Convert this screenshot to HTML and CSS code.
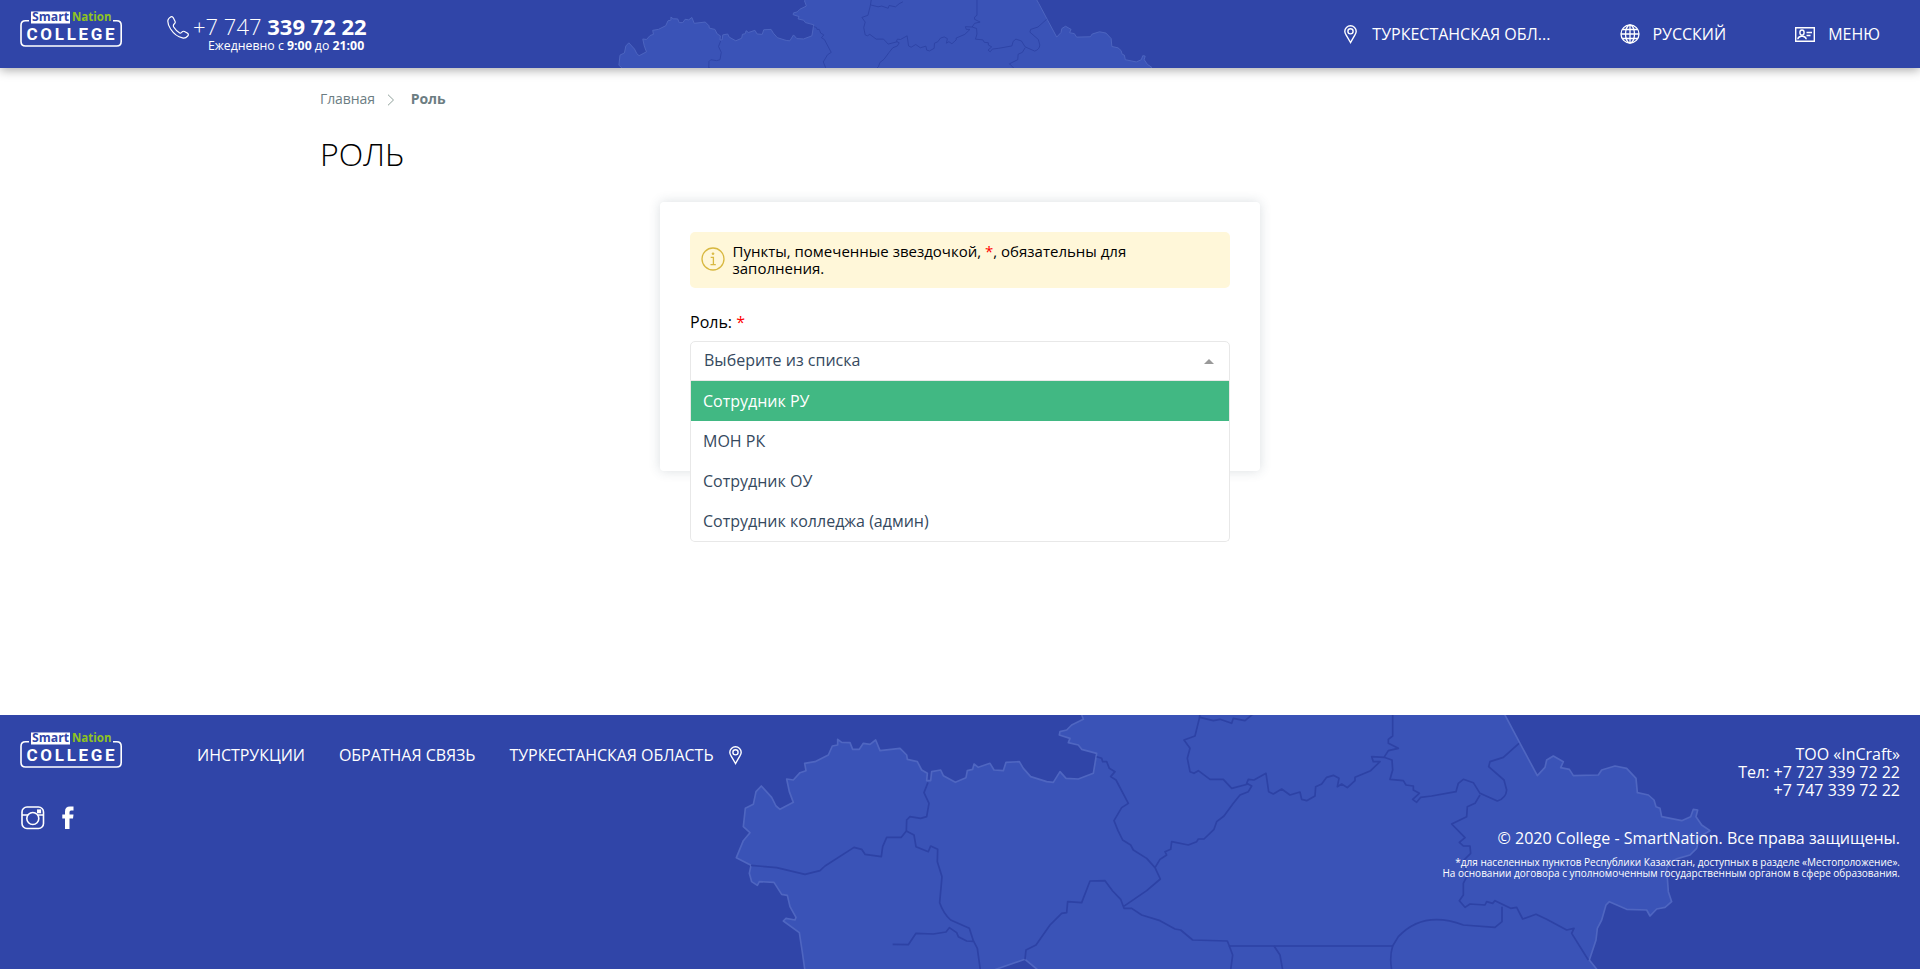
FILE: index.html
```html
<!DOCTYPE html>
<html lang="ru">
<head>
<meta charset="utf-8">
<title>Роль</title>
<link rel="stylesheet" href="styles.css">
</head>
<body>
<svg class="defs" width="0" height="0">
  <defs>
    <g id="map">
      <path class="map-land" d="M316 790L306 720 298 668 250 633 258 625 285 630 288 622 270 590 262 556 245 553 222 517 178 515 172 526 155 515 148 490 153 466 109 443 130 392 150 368 130 350 136 295 160 283 168 245 184 228 215 262 228 288 240 298 280 277 268 245 260 207 280 210 300 188 318 182 314 160 345 155 385 135 397 108 413 105 413 88 425 97 450 98 458 118 478 118 490 100 510 103 527 90 540 122 600 115 620 135 622 148 652 155 665 180 682 190 680 212 692 212 695 185 722 180 730 197 766 217 798 203 802 182 818 178 822 162 835 172 870 160 882 180 910 182 918 157 958 155 970 175 992 200 1040 215 1060 217 1080 185 1098 205 1135 207 1180 190 1190 130 1145 118 1135 105 1105 98 1110 85 1078 75 1080 65 1100 60 1115 45 1150 28 1140 0 1150 -20 2395 -20 2415 15 2460 100 2512 197 2535 172 2540 150 2560 138 2590 155 2582 173 2608 178 2620 197 2695 195 2705 180 2745 168 2780 175 2808 205 2812 248 2845 255 2862 270 2868 290 2880 295 2885 320 2945 332 2972 320 2980 298 2993 300 2988 320 3005 345 3030 362 2998 380 2990 415 2970 435 2935 445 2912 455 2900 475 2905 545 2915 575 2895 592 2870 597 2850 618 2840 600 2780 598 2728 575 2718 585 2705 630 2692 655 2688 690 2668 750 2700 790 1028 790 1010 777 975 748 890 777 860 790Z"/>
      <path class="map-line" d="M684 217L672 248 687 280 680 320 662 325 630 320 620 330 619 363 604 382 560 382 548 410 544 440 495 433 485 418 462 412 375 468 360 482 315 493 230 473 153 466"/>
      <path class="map-line" d="M619 363L642 375 648 410 685 425 692 408 713 418 712 455 726 500 719 578Q730 610 752 630L808 655 820 692 832 715 841 780M820 694L800 693 775 680 770 668 748 653 738 666 700 672 648 670 625 704 578 703"/>
      <path class="map-line" d="M1190 140L1205 145 1208 155 1220 155 1228 175 1245 185 1232 200 1248 210 1285 280 1265 293 1242 332 1254 362 1268 390 1292 405 1300 420 1340 445 1365 473 1381 507 1340 542 1270 590M975 748L978 720 1008 705 1050 645 1085 610 1100 608 1103 575 1145 578 1170 513 1215 512 1238 543 1262 568 1272 595 1295 595 1325 615 1380 632 1425 657 1442 660 1478 690 1582 693 1588 708 2078 708 2095 680Q2170 600 2290 645L2385 652 2406 635V590"/>
      <path class="map-line" d="M1365 473L1380 448 1400 435 1395 425 1412 418 1415 395 1465 405 1490 395 1495 387 1512 387 1542 358 1550 335 1572 318 1600 280 1620 255 1645 245 1655 228 1640 220 1645 208 1662 210 1698 190 1706 245 1720 252 1745 237 1770 255 1800 246 1805 268 1820 272 1845 258 1847 230 1865 222 1880 202 1900 196 1917 205 1912 230 1925 222 1942 233 1965 212 1965 202 2012 182 2040 155 2020 155 2015 140 2052 142 2065 122 2095 115 2065 100 2065 88 2078 78V-20"/>
      <path class="map-line" d="M1505 -20L1498 25 1485 78 1452 90 1470 115 1462 145 1470 185 1482 190 1495 182 1530 208 1570 208 1595 235 1645 222M1500 22L1540 32 1560 28 1595 40 1600 25 1635 32 1655 15 1675 5M2052 142L2076 150 2078 180 2070 208 2110 212 2118 225 2140 228 2140 240 2158 250 2138 268 2150 277 2162 262 2195 258 2268 245 2275 220 2290 208 2320 218 2340 250 2392 273Q2418 265 2420 240L2412 210 2366 170 2370 155 2410 142 2457 100"/>
      <path class="map-line" d="M2340 255L2325 280 2302 290 2300 320 2255 342 2295 383 2278 397 2290 408 2310 408 2312 430 2292 450 2300 500 2290 520 2290 555 2278 572 2295 592 2310 582 2355 585 2360 575 2378 580 2385 572 2432 595 2450 592 2468 627 2508 613 2540 628 2600 660 2622 655 2615 670 2665 750"/>
      <path class="map-line" d="M1588 708L1598 735 1592 780M1722 708L1740 735 1748 780M2078 708Q2068 740 2075 780"/>
    </g>
    <g id="logo">
      <path d="M9 10.700H5.500Q1 10.700 1 15.200V31.500Q1 36 5.500 36H96.700Q101.200 36 101.200 31.500V15.200Q101.200 10.700 96.700 10.700H93" fill="none" stroke="#fff" stroke-width="1.600"/>
      <rect x="11" y="1.500" width="39" height="12" fill="#fff"/>
      <text class="logo-word" x="12" y="11.300" textLength="37" lengthAdjust="spacingAndGlyphs" fill="#3045a8">Smart</text>
      <text class="logo-word" x="52" y="11.300" textLength="39.500" lengthAdjust="spacingAndGlyphs" fill="#8fc31f">Nation</text>
      <text class="logo-college" x="6.500" y="30">COLLEGE</text>
    </g>
    <g id="pin" fill="none" stroke="#fff" stroke-width="1.400">
      <path d="M6.500 17.500L2.200 10.200Q.8 8 .8 6.300A5.700 5.500 0 0 1 12.200 6.300Q12.200 8 10.800 10.200Z"/>
      <circle cx="6.500" cy="6.300" r="2.600"/>
    </g>
  </defs>
</svg>

<header class="header">
  <svg class="header-map" viewBox="0 -5 3150 370" preserveAspectRatio="none"><use href="#map"/></svg>
  <svg class="logo" viewBox="0 0 103 37"><use href="#logo"/></svg>
  <div class="phone">
    <svg class="phone-icon" viewBox="0 0 22 23"><path d="M3.200 1.200Q5-.2 6.300 1.800L8 5.300Q8.700 6.800 7.400 7.800 5.800 9 6.700 11 9.200 15 12.700 17 14 17.500 15 16 16 14.800 17.500 15.500L20.600 17.300Q22 18.500 20.700 20 18.500 22.600 15.500 21.900 8.500 20.500 3.600 13 .2 7.500 1 4 1.500 2.300 3.200 1.200Z" fill="none" stroke="#fff" stroke-width="1.200"/></svg>
    <div class="phone-text">
      <div class="phone-number">+7 747 <b>339 72 22</b></div>
      <div class="phone-hours">Ежедневно с <b>9:00</b> до <b>21:00</b></div>
    </div>
  </div>
  <nav class="top-nav">
    <a class="nav-item nav-region"><svg class="pin" viewBox="0 0 13 19"><use href="#pin"/></svg>ТУРКЕСТАНСКАЯ ОБЛ...</a>
    <a class="nav-item nav-lang"><svg class="globe" viewBox="0 0 20 20" fill="none" stroke="#fff" stroke-width="1.300"><circle cx="10" cy="10" r="9"/><ellipse cx="10" cy="10" rx="4.500" ry="9"/><path d="M10 1v18M1 10h18M2.500 5.500h15M2.500 14.500h15"/></svg>РУССКИЙ</a>
    <a class="nav-item nav-menu"><svg class="card-icon" viewBox="0 0 20 15" fill="none" stroke="#fff" stroke-width="1.400"><path d="M.7.700H19.300V14.300H.7Z"/><ellipse cx="7" cy="5.600" rx="2.100" ry="2.600"/><path d="M2.800 12.300Q3 10 6 9.300H8Q11 10 11.200 12.300M11.500 5.500h5.500M11.500 8.500h4"/></svg>МЕНЮ</a>
  </nav>
</header>

<main class="main">
  <div class="crumbs">
    <span>Главная</span>
    <svg class="chevron" viewBox="0 0 8 12"><path d="M1 .7L6.500 6 1 11.300" fill="none" stroke="#8fa09a"/></svg>
    <b>Роль</b>
  </div>
  <h1 class="title">РОЛЬ</h1>
  <section class="card">
    <div class="notice">
      <svg class="info" viewBox="0 0 24 24" fill="none" stroke="#d8b840" stroke-width="1.300"><circle cx="12" cy="12" r="11"/><path d="M9.700 10.300H12.400V17.500M9.500 17.600H14.800"/><circle cx="12" cy="6.700" r="1" fill="#d8b840" stroke-width=".6"/></svg>
      <p class="notice-text">Пункты, помеченные звездочкой, <i class="req">*</i>, обязательны для заполнения.</p>
    </div>
    <div class="label">Роль: <i class="req">*</i></div>
    <div class="select">
      <div class="select-box"><span>Выберите из списка</span><span class="caret"></span></div>
      <ul class="options">
        <li class="option option-active">Сотрудник РУ</li>
        <li class="option">МОН РК</li>
        <li class="option">Сотрудник ОУ</li>
        <li class="option">Сотрудник колледжа (админ)</li>
      </ul>
    </div>
  </section>
</main>

<footer class="footer">
  <svg class="footer-map" viewBox="0 15 3150 762"><use href="#map"/></svg>
  <div class="footer-left">
    <div class="footer-row">
      <svg class="logo" viewBox="0 0 103 37"><use href="#logo"/></svg>
      <nav class="footer-nav">
        <a>ИНСТРУКЦИИ</a>
        <a>ОБРАТНАЯ СВЯЗЬ</a>
        <a class="footer-region">ТУРКЕСТАНСКАЯ ОБЛАСТЬ <svg class="pin" viewBox="0 0 13 19"><use href="#pin"/></svg></a>
      </nav>
    </div>
    <div class="social">
      <svg width="24" height="24" viewBox="0 0 24 24" fill="none" stroke="#fff" stroke-width="1.600"><rect x="1" y="1" width="21.500" height="21.500" rx="5"/><circle cx="11.800" cy="12.500" r="6"/><path d="M1 9h6M17 9h5.500"/><rect x="16.800" y="4.200" width="2.500" height="2.300" fill="#fff"/></svg>
      <svg width="12" height="24" viewBox="0 0 12 24" fill="#fff"><path d="M11.500.5V4.500H9Q7.500 4.500 7.500 6.200V8.500H11.500L11 12.500H7.500V23H3V12.500H.3V8.500H3V5.500Q3 .5 8 .5Z"/></svg>
    </div>
  </div>
  <div class="footer-right">
    <div class="contacts">ТОО «InCraft»<br>Тел: +7 727 339 72 22<br>+7 747 339 72 22</div>
    <div class="copyright">© 2020 College - SmartNation. Все права защищены.</div>
    <div class="fine">*для населенных пунктов Республики Казахстан, доступных в разделе «Местоположение».<br>На основании договора с уполномоченным государственным органом в сфере образования.</div>
  </div>
</footer>
</body>
</html>
```
FILE: styles.css
```css
* { box-sizing: border-box; }
body {
  margin: 0;
  height: 969px;
  display: flex;
  flex-direction: column;
  overflow: hidden;
  background: #fff;
  color: #000;
  font: 16px/18px "Open Sans", "Noto Sans", sans-serif;
}
b { font-weight: 700; }
.defs { position: absolute; }
.map-land { fill: #3a53b7; stroke: #4f66c1; stroke-width: 5; stroke-linejoin: round; }
.map-line { fill: none; stroke: #2d42a5; stroke-width: 5; stroke-linejoin: round; }
.logo { display: block; width: 103px; height: 37px; flex: none; }
.logo-word { font: 700 12.5px "Open Sans", sans-serif; stroke: none; }
.logo-college { font: 700 17px Roboto, sans-serif; letter-spacing: 2.7px; fill: #fff; }

.header {
  position: relative;
  flex: none;
  height: 68px;
  display: flex;
  padding: 10px 40px 0 20px;
  background: #3045a8;
  color: #fff;
  box-shadow: 0 2px 10px rgba(0, 0, 0, .35);
}
.header-map { position: absolute; left: 595px; top: 0; width: 579px; height: 68px; }
.phone { display: flex; margin-left: 44px; }
.phone-icon { width: 22px; height: 23px; margin-top: 6px; }
.phone-text { margin-left: 4px; }
.phone-number { padding-top: 1px; font-size: 22px; line-height: 30px; font-weight: 300; white-space: nowrap; }
.phone-hours { font-size: 12.3px; line-height: 14px; margin: -2px 0 0 15px; white-space: nowrap; }
.top-nav { display: flex; margin-left: auto; padding-top: 12px; }
.nav-item { display: flex; height: 24px; line-height: 24px; align-items: center; white-space: nowrap; }
.nav-region { margin-right: 70px; gap: 15px; }
.nav-lang { margin-right: 69px; gap: 12px; }
.nav-menu { gap: 13px; }
.pin { width: 13px; height: 19px; }
.globe { width: 20px; height: 20px; }
.card-icon { width: 20px; height: 15px; }

.main { flex: 1; width: 1280px; margin: 0 auto; }
.crumbs { display: flex; align-items: center; margin-top: 21px; height: 20px; font-size: 14px; letter-spacing: -.1px; color: #6c7d82; }
.chevron { width: 8px; height: 12px; margin: 2px 16px 0 12px; }
.title { margin: 25px 0 0; font-size: 32px; line-height: 40px; font-weight: 300; }
.card {
  width: 600px;
  height: 269px;
  margin: 28px auto 0;
  padding: 30px;
  border-radius: 4px;
  background: #fff;
  box-shadow: 0 0 12px rgba(50, 70, 90, .18);
}
.notice { display: flex; align-items: center; height: 56px; padding: 0 10.5px; border-radius: 5px; background: #fff7d9; }
.info { width: 24px; height: 24px; margin: -2px 8px 0 0; flex: none; }
.notice-text { margin: 0; width: 410px; font-size: 15px; line-height: 17px; }
.req { color: #f00; font-style: normal; }
.label { margin-top: 25px; line-height: 18px; }
.select { position: relative; margin-top: 10px; color: #35495e; }
.select-box {
  display: flex;
  justify-content: space-between;
  height: 40px;
  padding: 9px 15px 0 13px;
  border: 1px solid #e8e8e8;
  border-radius: 5px 5px 0 0;
}
.caret { margin-top: 8px; width: 0; height: 0; border: 5px solid transparent; border-top: 0; border-bottom-color: #999; height: 5px; }
.options {
  position: absolute;
  top: 40px;
  left: 0;
  width: 540px;
  margin: 0;
  padding: 0;
  list-style: none;
  background: #fff;
  border: 1px solid #e8e8e8;
  border-top: 0;
  border-radius: 0 0 5px 5px;
}
.option { height: 40px; padding-left: 12px; line-height: 40px; }
.option-active { background: #41b883; color: #fff; }

.footer {
  position: relative;
  flex: none;
  height: 254px;
  display: flex;
  justify-content: space-between;
  padding: 16px 20px 0;
  background: #3045a8;
  color: #fff;
}
.footer-map { position: absolute; left: 700px; top: 0; width: 1050px; height: 254px; }
.footer-left, .footer-right { position: relative; }
.footer-row { display: flex; }
.footer-nav { display: flex; gap: 34px; margin: 13px 0 0 74px; height: 22px; line-height: 22px; letter-spacing: -.03px; white-space: nowrap; }
.footer-region { display: flex; gap: 15px; align-items: center; }
.social { display: flex; gap: 17px; margin: 38px 0 0 1px; }
.footer-right { text-align: right; padding-top: 14px; }
.copyright { margin-top: 30px; }
.fine { margin-top: 10px; font-size: 10px; line-height: 11px; }
```
